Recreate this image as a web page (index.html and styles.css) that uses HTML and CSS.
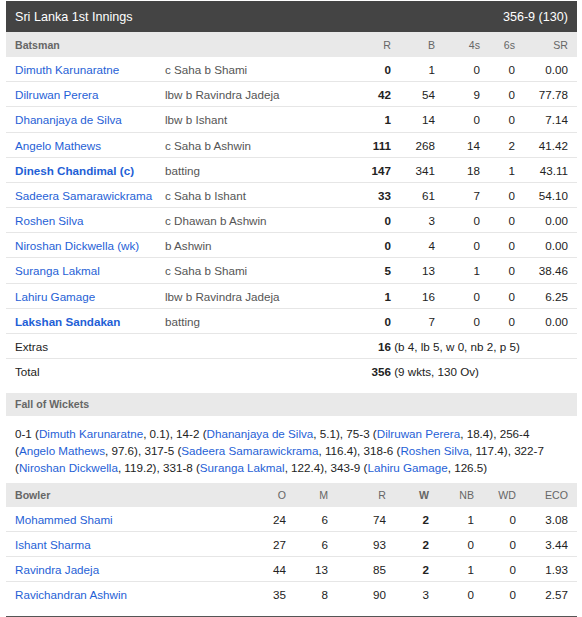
FILE: index.html
```html
<!DOCTYPE html>
<html>
<head>
<meta charset="utf-8">
<link rel="stylesheet" href="styles.css">
</head>
<body>
<div class="card">
  <div class="inn-head">
    <span>Sri Lanka 1st Innings</span>
    <span>356-9 (130)</span>
  </div>
  <table class="bat">
    <colgroup>
      <col class="c-name"><col class="c-dis"><col class="c-r"><col class="c-b"><col class="c-4"><col class="c-6"><col class="c-sr">
    </colgroup>
    <thead>
      <tr><th class="l b">Batsman</th><th></th><th>R</th><th>B</th><th>4s</th><th>6s</th><th class="last">SR</th></tr>
    </thead>
    <tbody>
      <tr><td class="l"><a>Dimuth Karunaratne</a></td><td class="dis">c Saha b Shami</td><td class="b">0</td><td>1</td><td>0</td><td>0</td><td class="last">0.00</td></tr>
      <tr><td class="l"><a>Dilruwan Perera</a></td><td class="dis">lbw b Ravindra Jadeja</td><td class="b">42</td><td>54</td><td>9</td><td>0</td><td class="last">77.78</td></tr>
      <tr class="tall"><td class="l"><a>Dhananjaya de Silva</a></td><td class="dis">lbw b Ishant</td><td class="b">1</td><td>14</td><td>0</td><td>0</td><td class="last">7.14</td></tr>
      <tr><td class="l"><a>Angelo Mathews</a></td><td class="dis">c Saha b Ashwin</td><td class="b">111</td><td>268</td><td>14</td><td>2</td><td class="last">41.42</td></tr>
      <tr><td class="l"><a class="b">Dinesh Chandimal (c)</a></td><td class="dis">batting</td><td class="b">147</td><td>341</td><td>18</td><td>1</td><td class="last">43.11</td></tr>
      <tr><td class="l"><a>Sadeera Samarawickrama</a></td><td class="dis">c Saha b Ishant</td><td class="b">33</td><td>61</td><td>7</td><td>0</td><td class="last">54.10</td></tr>
      <tr><td class="l"><a>Roshen Silva</a></td><td class="dis">c Dhawan b Ashwin</td><td class="b">0</td><td>3</td><td>0</td><td>0</td><td class="last">0.00</td></tr>
      <tr><td class="l"><a>Niroshan Dickwella (wk)</a></td><td class="dis">b Ashwin</td><td class="b">0</td><td>4</td><td>0</td><td>0</td><td class="last">0.00</td></tr>
      <tr class="tall"><td class="l"><a>Suranga Lakmal</a></td><td class="dis">c Saha b Shami</td><td class="b">5</td><td>13</td><td>1</td><td>0</td><td class="last">38.46</td></tr>
      <tr><td class="l"><a>Lahiru Gamage</a></td><td class="dis">lbw b Ravindra Jadeja</td><td class="b">1</td><td>16</td><td>0</td><td>0</td><td class="last">6.25</td></tr>
      <tr><td class="l"><a class="b">Lakshan Sandakan</a></td><td class="dis">batting</td><td class="b">0</td><td>7</td><td>0</td><td>0</td><td class="last">0.00</td></tr>
      <tr><td class="l" colspan="2">Extras</td><td colspan="5" class="sum"><span class="num b">16</span> (b 4, lb 5, w 0, nb 2, p 5)</td></tr>
      <tr class="total"><td class="l" colspan="2">Total</td><td colspan="5" class="sum"><span class="num b">356</span> (9 wkts, 130 Ov)</td></tr>
    </tbody>
  </table>

  <div class="sec-head">Fall of Wickets</div>
  <p class="fow">0-1 (<a>Dimuth Karunaratne</a>, 0.1), 14-2 (<a>Dhananjaya de Silva</a>, 5.1), 75-3 (<a>Dilruwan Perera</a>, 18.4), 256-4 (<a>Angelo Mathews</a>, 97.6), 317-5 (<a>Sadeera Samarawickrama</a>, 116.4), 318-6 (<a>Roshen Silva</a>, 117.4), 322-7 (<a>Niroshan Dickwella</a>, 119.2), 331-8 (<a>Suranga Lakmal</a>, 122.4), 343-9 (<a>Lahiru Gamage</a>, 126.5)</p>

  <table class="bowl">
    <colgroup>
      <col class="d-name"><col class="d-o"><col class="d-m"><col class="d-r"><col class="d-w"><col class="d-nb"><col class="d-wd"><col class="d-eco">
    </colgroup>
    <thead>
      <tr><th class="l b">Bowler</th><th>O</th><th>M</th><th>R</th><th class="b">W</th><th>NB</th><th>WD</th><th class="last">ECO</th></tr>
    </thead>
    <tbody>
      <tr><td class="l"><a>Mohammed Shami</a></td><td>24</td><td>6</td><td>74</td><td class="b">2</td><td>1</td><td>0</td><td class="last">3.08</td></tr>
      <tr><td class="l"><a>Ishant Sharma</a></td><td>27</td><td>6</td><td>93</td><td class="b">2</td><td>0</td><td>0</td><td class="last">3.44</td></tr>
      <tr><td class="l"><a>Ravindra Jadeja</a></td><td>44</td><td>13</td><td>85</td><td class="b">2</td><td>1</td><td>0</td><td class="last">1.93</td></tr>
      <tr><td class="l"><a>Ravichandran Ashwin</a></td><td>35</td><td>8</td><td>90</td><td>3</td><td>0</td><td>0</td><td class="last">2.57</td></tr>
    </tbody>
  </table>
  <div class="bottom-rule"></div>
</div>
</body>
</html>
```

FILE: styles.css
```css
html, body {
  margin: 0;
  padding: 0;
  background: #ffffff;
}

body {
  font-family: "Liberation Sans", Arial, sans-serif;
  font-size: 11.65px;
  color: #222222;
}

.card {
  width: 571px;
  margin: 1px 0 0 6px;
}

.inn-head {
  display: flex;
  justify-content: space-between;
  align-items: center;
  height: 31px;
  padding: 0 9px;
  background: #444444;
  color: #ffffff;
  font-size: 12.6px;
}

table {
  width: 571px;
  border-collapse: collapse;
  table-layout: fixed;
}

th, td {
  padding: 0;
  text-align: right;
  white-space: nowrap;
}

th {
  height: 24px;
  background: #e9e9e9;
  color: #666666;
  font-size: 10.6px;
  font-weight: normal;
}

.bat th {
  height: 25px;
}

td {
  height: 24px;
  border-bottom: 1px solid #e6e6e6;
  color: #222222;
}

.tall td {
  height: 25px;
}

.l {
  text-align: left;
  padding-left: 9px;
}

.last {
  padding-right: 9px;
}

.b {
  font-weight: bold;
}

a {
  color: #1f5fd6;
  text-decoration: none;
}

.dis {
  text-align: left;
  padding-left: 4px;
  color: #555555;
}

.c-name { width: 155px; }
.c-dis { width: 194px; }
.c-r { width: 36px; }
.c-b { width: 44px; }
.c-4 { width: 45px; }
.c-6 { width: 35px; }
.c-sr { width: 62px; }

.sum {
  text-align: left;
}

.num {
  display: inline-block;
  width: 36px;
  text-align: right;
}

.total td {
  border-bottom: none;
}

.sec-head {
  margin-top: 10px;
  height: 23px;
  line-height: 23px;
  padding-left: 9px;
  background: #e9e9e9;
  color: #666666;
  font-size: 10.6px;
  font-weight: bold;
}

.fow {
  margin: 0;
  padding: 9px 30px 7px 9px;
  line-height: 17px;
}

.d-name { width: 244px; }
.d-o { width: 36px; }
.d-m { width: 42px; }
.d-r { width: 58px; }
.d-w { width: 43px; }
.d-nb { width: 45px; }
.d-wd { width: 42px; }
.d-eco { width: 61px; }

.bowl tbody tr:last-child td {
  border-bottom: none;
}

.bottom-rule {
  margin-top: 10px;
  height: 2px;
  background: #555555;
}
```
